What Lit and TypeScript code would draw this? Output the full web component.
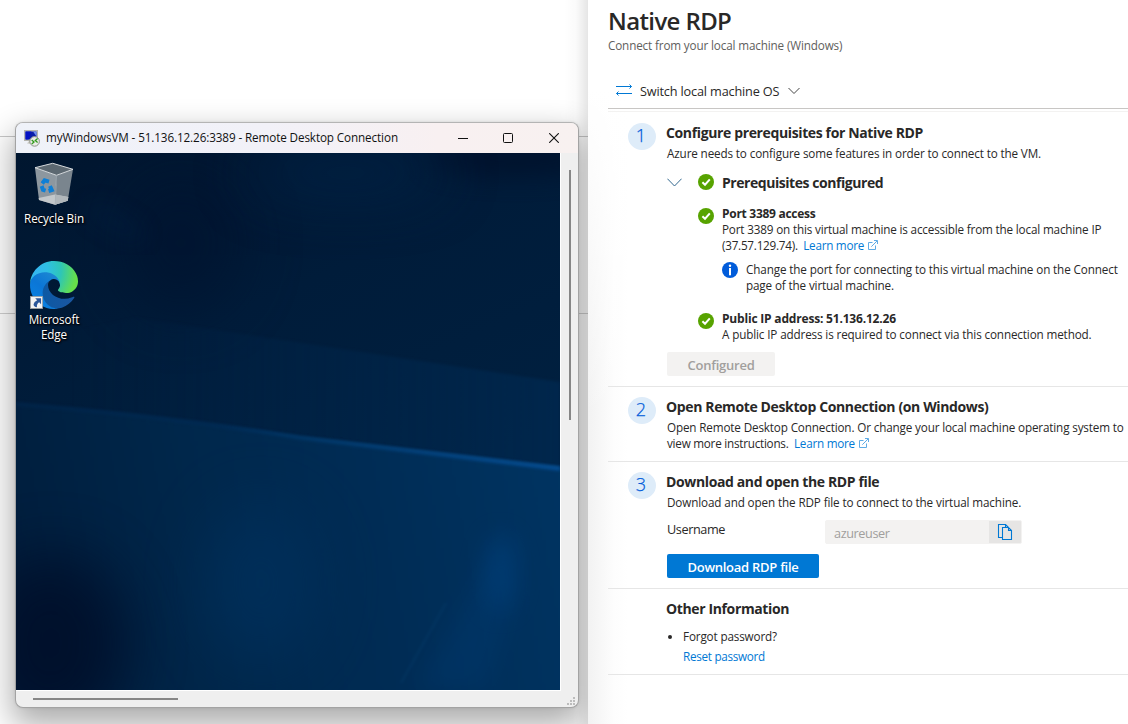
import { LitElement, html, css, svg } from 'lit';
import { customElement, property } from 'lit/decorators.js';

const checkIcon = html`<svg class="ic16" width="16" height="16" viewBox="0 0 16 16">
  <circle cx="8" cy="8" r="8" fill="#57a300"/>
  <path d="M4.4 8.2 7 10.7 11.8 5.4" fill="none" stroke="#fff" stroke-width="2"/>
</svg>`;

const infoIcon = html`<svg class="ic16" width="16" height="16" viewBox="0 0 16 16">
  <circle cx="8" cy="8" r="8" fill="#015cda"/>
  <circle cx="8" cy="3.7" r="1.2" fill="#fff"/>
  <rect x="7" y="6" width="2" height="7.3" fill="#fff"/>
</svg>`;

const linkIcon = html`<svg class="ext" width="10" height="10" viewBox="0 0 10 10" fill="none" stroke="#5fabe5">
  <path d="M4.5 2.5H.5v7h7V5.5"/><path d="M3.3 6.7 9.2.8M6 .5h3.5V4"/>
</svg>`;

@customElement('remote-window')
export class RemoteWindow extends LitElement {
  static styles = css`
    :host {
      display: flex; flex-direction: column; box-sizing: border-box; width: 564px; height: 586px;
      border: 1px solid #a3a3a3; border-top-color: #b4b4b4; border-radius: 8px; background: #efefef;
      box-shadow: 0 0 3px rgba(0,0,0,.1), 0 14px 32px 3px rgba(0,0,0,.33);
      font: 11.7px/15px "Open Sans", sans-serif; overflow: hidden;
    }
    .bar {
      display: flex; align-items: center; height: 30px; padding-left: 8px; flex: none;
      background: linear-gradient(90deg, #eff2f9 0, #f2f1f8 45%, #f8f0f1 75%, #f8f1f0 100%); color: #111;
    }
    .title { margin-left: 6px; flex: 1; line-height: 14px; padding-bottom: 2px; white-space: nowrap; letter-spacing: -.11px; }
    .buttons { display: flex; gap: 35px; padding-right: 19px; }
    .buttons svg { display: block; }
    .buttons svg:last-child { margin-left: 1px; }
    .main { display: flex; flex: 1; min-height: 0; }
    .desk {
      display: grid; width: 544px; height: 537px; overflow: hidden;
      border-right: 1px solid #fff; border-bottom: 1px solid #fff; flex: none;
    }
    .desk > * { grid-area: 1 / 1; }
    .icons { display: flex; flex-direction: column; gap: 35px; width: 76px; padding-top: 7px; }
    .item { display: flex; flex-direction: column; align-items: center; gap: 3px; color: #fff; text-align: center; }
    .item span { text-shadow: 1px 1px 2px #000, 0 1px 2px #000; letter-spacing: -.1px; }
    .side { flex: 1; padding: 17px 0 0 8px; }
    .vthumb { width: 2px; height: 250px; background: #868686; }
    .foot { display: flex; justify-content: space-between; align-items: flex-start; height: 16px; padding: 0 2px 0 17px; }
    .hthumb { width: 145px; height: 2px; margin-top: 7px; background: #868686; }
    .grip { margin-top: 6px; }
  `;

  render() {
    return html`
      <div class="bar">
        <svg width="16" height="17" viewBox="0 0 16 17">
          <rect x=".5" y=".5" width="13" height="10" fill="#cfcfc9" stroke="#b5b5ae"/>
          <rect x="1.5" y="1.5" width="11" height="8" fill="#0a1ea8"/>
          <path d="M1.5 1.5h6l-3 8h-3z" fill="#0512c4"/><path d="M9 1.5h3.5v5z" fill="#6f8ff0"/>
          <path d="M3 13.5 5 11h4v3z" fill="#c9c9c3"/>
          <circle cx="10.6" cy="11.4" r="4.8" fill="#e9ece6" stroke="#8d918a"/>
          <path d="m7.7 9.9 2.3 2-2.3 2M13.6 8.6l-2.3 2 2.3 2" fill="none" stroke="#2f9a1c" stroke-width="1.3"/>
        </svg>
        <span class="title">myWindowsVM - 51.136.12.26:3389 - Remote Desktop Connection</span>
        <div class="buttons">
          <svg width="10" height="10"><path d="M0 5.5h10" stroke="#111"/></svg>
          <svg width="10" height="10"><rect x=".5" y=".5" width="9" height="9" rx="1" fill="none" stroke="#111"/></svg>
          <svg width="10" height="10"><path d="M.2.2l9.6 9.6M9.8.2.2 9.8" stroke="#111" stroke-width="1.1"/></svg>
        </div>
      </div>
      <div class="main">
        <div class="desk">
          ${this.wallpaper()}
          <div class="icons">
            <div class="item">${this.bin()}<span>Recycle Bin</span></div>
            <div class="item">${this.edge()}<span>Microsoft<br>Edge</span></div>
          </div>
        </div>
        <div class="side"><div class="vthumb"></div></div>
      </div>
      <div class="foot">
        <div class="hthumb"></div>
        <svg class="grip" width="9" height="9" fill="#bcbcbc">
          ${[[6, 0], [3, 3], [6, 3], [0, 6], [3, 6], [6, 6]].map(([x, y]) => svg`<rect x=${x} y=${y} width="2" height="2"/>`)}
        </svg>
      </div>`;
  }

  wallpaper() {
    return html`<svg width="544" height="537" viewBox="0 0 544 537" color-interpolation-filters="sRGB">
      <defs>
        <linearGradient id="up" x1="0" y1="0" x2=".45" y2="1">
          <stop offset="0" stop-color="#00162f"/><stop offset=".4" stop-color="#001c3a"/><stop offset="1" stop-color="#002243"/>
        </linearGradient>
        <linearGradient id="low" x1="0" y1=".4" x2="1" y2=".3">
          <stop offset="0" stop-color="#001d3c"/><stop offset=".35" stop-color="#00274b"/>
          <stop offset=".65" stop-color="#002c55"/><stop offset="1" stop-color="#003462"/>
        </linearGradient>
        <linearGradient id="beam" x1="0" y1="0" x2="544" y2="0" gradientUnits="userSpaceOnUse">
          <stop offset="0" stop-color="#002a54" stop-opacity=".4"/><stop offset=".35" stop-color="#002b56" stop-opacity=".6"/>
          <stop offset=".55" stop-color="#003564" stop-opacity=".9"/><stop offset="1" stop-color="#04498c"/></linearGradient>
        <linearGradient id="core" x1="200" y1="0" x2="544" y2="0" gradientUnits="userSpaceOnUse">
          <stop offset="0" stop-color="#0a4a86" stop-opacity="0"/><stop offset=".3" stop-color="#0a4a86" stop-opacity=".6"/>
          <stop offset="1" stop-color="#0a5aa4"/></linearGradient>
        <linearGradient id="mid" x1="0" x2="1"><stop offset=".1" stop-color="#00264c" stop-opacity="0"/>
          <stop offset="1" stop-color="#00284f" stop-opacity=".8"/></linearGradient>
        <filter id="b2" x="-10%" y="-50%" width="120%" height="200%"><feGaussianBlur stdDeviation="1.6"/></filter>
        <filter id="b30" x="-150%" y="-200%" width="400%" height="500%"><feGaussianBlur stdDeviation="30"/></filter>
        <filter id="b12" x="-150%" y="-150%" width="400%" height="400%"><feGaussianBlur stdDeviation="12"/></filter>
      </defs>
      <rect width="544" height="537" fill="url(#up)"/>
      <ellipse cx="165" cy="90" rx="60" ry="70" fill="#00122e" opacity=".6" filter="url(#b30)"/>
      <ellipse cx="500" cy="5" rx="90" ry="18" fill="#00112b" opacity=".8" filter="url(#b12)"/>
      <ellipse cx="330" cy="20" rx="100" ry="22" fill="#002449" opacity=".8" filter="url(#b30)"/>
      <path d="M75 55 125 84" stroke="#06305a" stroke-width="10" opacity=".35" filter="url(#b12)"/>
      <path d="M120 165 544 229V314L0 249V190z" fill="url(#mid)" filter="url(#b2)"/>
      <path d="M-20 248Q150 262 284 283L564 316V560H-20z" fill="url(#low)" filter="url(#b2)"/>
      <ellipse cx="35" cy="490" rx="75" ry="90" fill="#000f2a" opacity=".9" filter="url(#b30)"/>
      <ellipse cx="245" cy="430" rx="55" ry="80" fill="#003260" opacity=".6" filter="url(#b30)"/>
      <path d="M455 440 500 365 500 445 470 537H400z" fill="#003f7a" opacity=".28" filter="url(#b12)"/>
      <ellipse cx="484" cy="420" rx="15" ry="38" fill="#00427f" opacity=".5" filter="url(#b12)"/>
      <path d="M385 530 430 450" stroke="#0a4474" stroke-width="2" opacity=".35" filter="url(#b2)"/>
      <path d="M0 251Q150 263 284 285L544 316" fill="none" stroke="url(#beam)" stroke-width="4" filter="url(#b2)"/>
      <path d="M200 272 284 284 544 314.500" fill="none" stroke="url(#core)" stroke-width="2" opacity=".6" filter="url(#b2)"/>
    </svg>`;
  }

  bin() {
    return html`<svg width="48" height="48" viewBox="0 0 48 48">
      <path d="M5 7.700 26.500 15.300 25 44.700 9 40z" fill="#8d979f"/>
      <path d="M26.500 15.300 43 9.300 37.700 40.700 25 44.700z" fill="#7a858e"/>
      <path d="M8.600 38 25 34.500 38.300 37 37.700 40.700 25 44.700 9 40z" fill="#c3c8cb"/>
      <path d="M25 34.500 38.300 37 37.700 40.700 25 44.700z" fill="#b1b7bb"/>
      <path d="M5 7.700 22.700 3.300 43 9.300 26.500 15.300z" fill="#5c6871" stroke="#d6dadd" stroke-width="1"/>
      <path d="M26.500 15.300 25.200 44" stroke="#a9b2b9" stroke-width=".8"/>
      <g fill="none" stroke="#0e7fd6" stroke-width="4">
        <path d="M12.200 23.500 14.600 20.400 19 21.600"/><path d="M11.600 26 13 29.800 15.600 30.600"/><path d="M18.600 31 21.800 30 20 26"/>
      </g>
    </svg>`;
  }

  edge() {
    return html`<svg width="48" height="48" viewBox="0 0 256 256">
      <defs>
        <linearGradient id="e1" x1="58" y1="177" x2="236" y2="177" gradientUnits="userSpaceOnUse">
          <stop offset="0" stop-color="#0c59a4"/><stop offset="1" stop-color="#1a56a0"/></linearGradient>
        <linearGradient id="e2" x1="140" y1="90" x2="35" y2="220" gradientUnits="userSpaceOnUse">
          <stop offset="0" stop-color="#1b86d2"/><stop offset=".5" stop-color="#0b76d6"/><stop offset="1" stop-color="#0a80e0"/></linearGradient>
        <radialGradient id="e3" cx="25" cy="50" r="235" gradientUnits="userSpaceOnUse">
          <stop offset="0" stop-color="#35b5f1"/><stop offset=".3" stop-color="#2fbfe3"/>
          <stop offset=".6" stop-color="#2ec6b6"/><stop offset=".95" stop-color="#66e04a"/></radialGradient>
      </defs>
      <path fill="url(#e1)" d="M231 190.500c-3.400 1.800-6.900 3.400-10.500 4.700a101.500 101.500 0 0 1-35.900 6.500c-47.300 0-88.500-32.500-88.500-74.300 0-11.400 6.400-21.900 16.400-27.300-42.800 1.800-53.800 46.400-53.800 72.500 0 74 68.100 81.400 82.800 81.400 7.900 0 19.800-2.300 27-4.600l1.300-.4c27.600-9.500 51-28.100 66.600-52.800 1.200-1.900.6-4.300-1.200-5.500-1.300-.8-2.900-.9-4.200-.2z"/>
      <path fill="url(#e2)" d="M105.700 241.400c-8.900-5.500-16.600-12.800-22.700-21.300-26.300-36-18.400-86.500 17.600-112.800 3.800-2.700 7.700-5.200 11.900-7.200 3.100-1.500 8.400-4.100 15.500-4 10.100.1 19.600 4.900 25.700 13 4 5.400 6.300 11.900 6.400 18.700 0-.2 24.500-79.600-80-79.600-43.900 0-80 41.700-80 78.200-.2 19.300 4 38.500 12.100 56 27.600 58.800 94.800 87.600 156.400 67.100-21.100 6.600-44.100 3.700-62.900-8.100z"/>
      <path fill="url(#e3)" d="M152.300 148.900c-.8 1-3.300 2.500-3.300 5.700 0 2.600 1.700 5.100 4.700 7.200 14.400 10 41.500 8.700 41.600 8.700 10.700 0 21.100-2.900 30.300-8.300 18.800-11 30.400-31.100 30.400-52.900.3-22.400-8-37.300-11.300-43.900C223.500 23.900 177.700 0 128 0 58 0 1 56.200 0 126.200c.5-36.500 36.800-66 80-66 3.500 0 23.500.3 42 10.100 16.300 8.600 24.900 18.900 30.800 29.200 6.200 10.700 7.300 24.100 7.300 29.500 0 5.300-2.700 13.300-7.800 19.900z"/>
      <rect x="2" y="189" width="65" height="65" fill="#f4f4f4" stroke="#9a9a9a" stroke-width="4"/>
      <path fill="#2b579a" d="M28 199h31v31l-10-10q-14 8-12 26-18-2-18-16 2-13 19-21z"/>
    </svg>`;
  }
}

@customElement('step-row')
export class StepRow extends LitElement {
  @property() number = '';
  static styles = css`
    :host { display: flex; padding: 10px 0 0 20px; border-bottom: 1px solid #e6e6e6; box-sizing: border-box; }
    .num {
      width: 28px; height: 27px; border-radius: 50%; background: #deecf9; color: #015cda; flex: none;
      font-size: 18px; line-height: 24px; font-weight: 300; text-align: center; text-indent: -2px;
      -webkit-text-stroke: .25px #015cda;
    }
    .num.blank { visibility: hidden; }
    .body { margin-left: 11px; flex: 1; min-width: 0; }
  `;
  render() {
    return html`<div class="num ${this.number ? '' : 'blank'}">${this.number}</div><div class="body"><slot></slot></div>`;
  }
}

@customElement('app-root')
export class AppRoot extends LitElement {
  static styles = css`
    :host {
      display: grid; grid-template-columns: 588px 540px; width: 1128px; height: 724px; overflow: hidden;
      font: 11.7px/16px "Open Sans", sans-serif; color: #292827; background: #fff;
    }
    .backdrop {
      padding: 122px 0 0 15px; box-sizing: border-box; height: 724px; min-width: 0;
      background:
        linear-gradient(90deg, rgba(0,0,0,0) 0, rgba(0,0,0,.02) 50%, rgba(0,0,0,.1) 100%) right / 24px 100% no-repeat,
        linear-gradient(#c8c8c8, #c8c8c8) 0 136px / 100% 1px no-repeat,
        linear-gradient(#d0d0d0, #d0d0d0) 0 313px / 100% 1px no-repeat, #fff;
    }
    .panel {
      position: relative; z-index: 1; height: 724px; padding-left: 20px; box-sizing: border-box; white-space: nowrap;
      background:
        linear-gradient(#fff 90px, rgba(255,255,255,0) 420px),
        linear-gradient(90deg, #f2f2f2 0, #f7f7f7 12px, #fdfdfd 26px, #fff 40px);
    }
    h1 { margin: 0; padding-top: 5px; font-size: 24px; line-height: 32px; font-weight: 600; letter-spacing: -.62px; }
    .sub { color: #605e5c; letter-spacing: -.14px; }
    .tool {
      display: flex; align-items: center; height: 34px; margin-top: 21px; padding-left: 8px;
      border-bottom: 1px solid #c8c6c4; font-size: 12.7px; letter-spacing: -.16px;
    }
    .tool span { margin: 0 9px 0 8px; }
    .hair { height: 1px; margin-top: 2px; background: #f3f2f1; }
    svg { display: block; flex: none; }
    h2 { margin: 0 0 2px -1px; font-size: 14px; line-height: 20px; font-weight: 700; letter-spacing: -.37px; }
    .s1 { height: 275px; padding-top: 11px; }
    .s2 { height: 75px; }
    .s3 { height: 127px; }
    .s4 { height: 86px; }
    .pre { display: flex; align-items: center; height: 20px; margin-top: 12px; font-size: 14px; font-weight: 700; letter-spacing: -.45px; }
    .pre .ic16 { margin: -2px 8px 0 16px; }
    .pre .chev { margin-top: -2px; }
    .check { display: flex; gap: 8px; margin-left: 31px; }
    .check > .ic16 { margin-top: 2px; }
    .c1 { margin-top: 13px; }
    .c2 { margin-top: 18px; }
    .info { display: flex; gap: 8px; margin-top: 9px; }
    .info div { margin-top: -1px; }
    b { display: block; margin-bottom: -1px; font-size: 12px; font-weight: 700; letter-spacing: -.28px; }
    b.ip { letter-spacing: -.19px; }
    a { color: #0078d4; letter-spacing: -.25px; }
    .ln { display: flex; }
    .ln a { margin-left: 5.500px; }
    .ext { margin: 3px 0 0 4px; }
    .t1 { letter-spacing: -.135px; }
    .t2 { letter-spacing: -.165px; }
    .t3 { letter-spacing: -.24px; }
    .t4 { letter-spacing: -.125px; }
    .t5 { letter-spacing: -.145px; }
    .t6 { letter-spacing: -.285px; }
    .btn {
      display: flex; align-items: center; justify-content: center; width: 108px; height: 24px; padding-top: 2px; box-sizing: border-box;
      margin-top: 10px; border-radius: 2px; background: #f3f2f1; color: #a19f9d; font-size: 13px; font-weight: 600; letter-spacing: -.24px;
    }
    .btn.primary { width: 152px; background: #0078d4; color: #fff; letter-spacing: -.26px; }
    .field { display: flex; align-items: flex-start; height: 24px; margin-top: 10px; font-size: 12.7px; }
    .field label { width: 158px; line-height: 18px; letter-spacing: -.42px; }
    .box {
      display: flex; align-items: center; width: 197px; height: 24px; box-sizing: border-box; border-radius: 2px;
      border: 1px solid #f3f2f1; background: #f3f2f1; color: #a19f9d; letter-spacing: -.4px; overflow: hidden;
    }
    .box span { flex: 1; padding: 2px 0 0 8px; }
    .copy { display: flex; align-items: center; justify-content: center; width: 32px; height: 22px; background: #e6e5e4; }
    ul { margin: 9px 0 0; padding: 0; list-style: none; }
    li { display: flex; align-items: center; }
    li::before { content: ""; width: 4px; height: 4px; margin: 1px 11px 0 1px; border-radius: 50%; background: #292827; }
    .reset { display: block; margin: 4px 0 0 16px; }
  `;

  render() {
    return html`
      <div class="backdrop"><remote-window></remote-window></div>
      <div class="panel">
        <h1>Native RDP</h1>
        <div class="sub">Connect from your local machine (Windows)</div>
        <div class="tool">
          <svg width="16" height="14" viewBox="0 0 16 14" fill="none" stroke="#0078d4">
            <path d="M0 2.500h15.500M13.500.500l2 2-2 2M16 9.500H.5M2.500 7.500l-2 2 2 2"/></svg>
          <span>Switch local machine OS</span>
          <svg width="12" height="8" viewBox="0 0 12 8" fill="none" stroke="#444"><path d="M.5 1 6 6.500 11.500 1"/></svg>
        </div>
        <div class="hair"></div>

        <step-row class="s1" number="1">
          <h2>Configure prerequisites for Native RDP</h2>
          <div class="t1">Azure needs to configure some features in order to connect to the VM.</div>
          <div class="pre">
            <svg class="chev" width="15" height="9" viewBox="0 0 15 9" fill="none" stroke="#33688f"><path d="M.4.700 7.500 8 14.600.7"/></svg>
            ${checkIcon}<span>Prerequisites configured</span>
          </div>
          <div class="check c1">
            ${checkIcon}
            <div>
              <b>Port 3389 access</b>
              <div class="t2">Port 3389 on this virtual machine is accessible from the local machine IP</div>
              <div class="ln"><span class="t3">(37.57.129.74).</span><a>Learn more</a>${linkIcon}</div>
              <div class="info">
                ${infoIcon}
                <div class="t4">Change the port for connecting to this virtual machine on the Connect<br>
                  <span class="t1">page of the virtual machine.</span></div>
              </div>
            </div>
          </div>
          <div class="check c2">
            ${checkIcon}
            <div>
              <b class="ip">Public IP address: 51.136.12.26</b>
              <div class="t1">A public IP address is required to connect via this connection method.</div>
            </div>
          </div>
          <div class="btn">Configured</div>
        </step-row>

        <step-row class="s2" number="2">
          <h2>Open Remote Desktop Connection (on Windows)</h2>
          <div class="t5">Open Remote Desktop Connection. Or change your local machine operating system to</div>
          <div class="ln"><span class="t3">view more instructions.</span><a>Learn more</a>${linkIcon}</div>
        </step-row>

        <step-row class="s3" number="3">
          <h2>Download and open the RDP file</h2>
          <div class="t4">Download and open the RDP file to connect to the virtual machine.</div>
          <div class="field">
            <label>Username</label>
            <div class="box">
              <span>azureuser</span>
              <div class="copy">
                <svg width="16" height="16" viewBox="0 0 16 16" fill="none" stroke="#0078d4" stroke-width="1.100">
                  <path d="M5 13.500H1.500V.5h7l3 3M5.500 3.500h6l3 3v9h-9zM11.500 3.500v3h3M8.500.5v3"/></svg>
              </div>
            </div>
          </div>
          <div class="btn primary">Download RDP file</div>
        </step-row>

        <step-row class="s4">
          <h2>Other Information</h2>
          <ul><li class="t5">Forgot password?</li></ul>
          <a class="reset t6">Reset password</a>
        </step-row>
      </div>`;
  }
}
